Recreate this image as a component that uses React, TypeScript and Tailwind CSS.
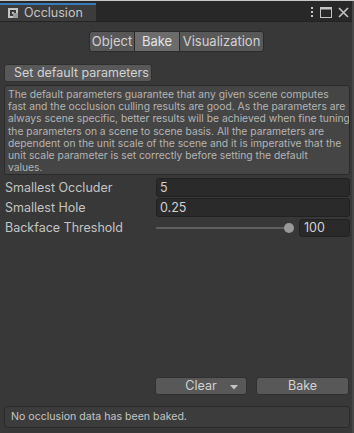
import React from "react";

const helpLines = [
  "The default parameters guarantee that any given scene computes",
  "fast and the occlusion culling results are good. As the parameters are",
  "always scene specific, better results will be achieved when fine tuning",
  "the parameters on a scene to scene basis. All the parameters are",
  "dependent on the unit scale of the scene and it is imperative that the",
  "unit scale parameter is set correctly before setting the default",
  "values.",
];

export default function App() {
  const font = { fontFamily: "Inter, 'Noto Sans', sans-serif" };
  return (
    <div
      className="w-[354px] h-[433px] bg-[#383838] flex flex-col text-[#c4c4c4] overflow-hidden relative"
      style={font}
    >
      <div className="h-px bg-[#c8c8c8] shrink-0" />
      {/* tab bar */}
      <div className="h-[21px] bg-[#282828] flex items-end shrink-0 border-b border-[#232323]">
        <div className="w-[96px] h-[18px] bg-[#3c3c3c] border-t-2 border-[#3a79bb] flex items-center pl-[8px] gap-[6px]">
          <svg width="10" height="10" viewBox="0 0 10 10">
            <rect x="0" y="0" width="10" height="10" fill="#c4c4c4" />
            <rect x="2" y="2" width="6" height="6" fill="#3c3c3c" />
            <rect x="4" y="4" width="2" height="2" fill="#c4c4c4" />
            <rect x="5" y="5" width="5" height="5" fill="#9a9a9a" />
          </svg>
          <span className="text-[12.5px] leading-none text-[#c4c4c4]">Occlusion</span>
        </div>
        <div className="flex-1 h-[18px] flex items-center justify-end gap-[6px] pr-[5px]">
          <svg width="4" height="12" viewBox="0 0 4 12">
            <rect x="1" y="1" width="2" height="2" fill="#c4c4c4" />
            <rect x="1" y="5" width="2" height="2" fill="#c4c4c4" />
            <rect x="1" y="9" width="2" height="2" fill="#c4c4c4" />
          </svg>
          <svg width="12" height="11" viewBox="0 0 12 11">
            <rect x="0.5" y="0.5" width="11" height="10" fill="none" stroke="#c4c4c4" />
            <rect x="0" y="0" width="12" height="2.5" fill="#c4c4c4" />
          </svg>
          <svg width="11" height="11" viewBox="0 0 11 11">
            <path d="M1 1 L10 10 M10 1 L1 10" stroke="#c4c4c4" strokeWidth="1.6" />
          </svg>
        </div>
      </div>

      {/* body */}
      <div className="flex-1 flex flex-col px-[4px]">
        <div className="flex justify-center mt-[9px] ml-[-1px]">
          <div className="flex h-[21px] text-[13px] leading-none">
            <div className="w-[46px] bg-[#585858] border border-[#2a2a2a] rounded-l-[3px] flex items-center justify-center text-[#d2d2d2]">
              Object
            </div>
            <div className="w-[44px] bg-[#6c6c6c] border-y border-[#2a2a2a] flex items-center justify-center text-[#e4e4e4]">
              Bake
            </div>
            <div className="w-[85px] bg-[#585858] border border-[#2a2a2a] rounded-r-[3px] flex items-center justify-center text-[#d2d2d2]">
              Visualization
            </div>
          </div>
        </div>

        <div className="mt-[12px] w-[148px] h-[18px] bg-[#585858] border border-[#303030] rounded-[3px] flex items-center pl-[9px] text-[12.5px] leading-none text-[#d2d2d2]">
          Set default parameters
        </div>

        <div className="mt-[3px] bg-[#454545] border border-[#2a2a2a] rounded-[3px] pl-[3px] pr-[2px] pt-[2px] pb-[1px] text-[10.3px] leading-[12.2px] text-[#b4b4b4] whitespace-nowrap overflow-hidden">
          {helpLines.map((l, i) => (
            <div key={i}>{l}</div>
          ))}
        </div>

        <div className="mt-[3px] flex flex-col gap-[1px] text-[12.5px] leading-none">
          <div className="flex items-center h-[19px]">
            <div className="w-[152px] pl-[1px]">Smallest Occluder</div>
            <div className="flex-1 h-[19px] bg-[#2a2a2a] border border-[#212121] rounded-[3px] flex items-center pl-[3px] text-[#d2d2d2]">
              5
            </div>
          </div>
          <div className="flex items-center h-[19px]">
            <div className="w-[152px] pl-[1px]">Smallest Hole</div>
            <div className="flex-1 h-[19px] bg-[#2a2a2a] border border-[#212121] rounded-[3px] flex items-center pl-[3px] text-[#d2d2d2]">
              0.25
            </div>
          </div>
          <div className="flex items-center h-[19px]">
            <div className="w-[152px] pl-[1px]">Backface Threshold</div>
            <div className="flex-1 flex items-center">
              <div className="flex-1 relative h-[10px] flex items-center mr-[5px]">
                <div className="w-full h-[2px] bg-[#5e5e5e]" />
                <div className="absolute right-[-5px] w-[10px] h-[10px] rounded-full bg-[#999999]" />
              </div>
              <div className="w-[51px] ml-[5px] h-[18px] bg-[#2a2a2a] border border-[#212121] rounded-[3px] flex items-center pl-[4px] text-[#d2d2d2]">
                100
              </div>
            </div>
          </div>
        </div>

        <div className="flex-1" />

        <div className="flex justify-end gap-[9px] pr-[1px] text-[12.5px] leading-none">
          <div className="w-[92px] h-[18px] bg-[#585858] border border-[#303030] rounded-[3px] flex items-center justify-center relative text-[#d2d2d2]">
            <span>Clear</span>
            <svg className="absolute right-[8px] top-[7px]" width="8" height="5" viewBox="0 0 8 5">
              <path d="M0 0 L8 0 L4 4.5 Z" fill="#c4c4c4" />
            </svg>
          </div>
          <div className="w-[93px] h-[18px] bg-[#585858] border border-[#303030] rounded-[3px] flex items-center justify-center text-[#d2d2d2]">
            Bake
          </div>
        </div>

        <div className="mt-[11px] mb-[5px] h-[22px] bg-[#3c3c3c] border border-[#2a2a2a] rounded-[3px] flex items-center pl-[6px] text-[10.6px] text-[#c4c4c4]">
          No occlusion data has been baked.
        </div>
      </div>
      <div className="absolute right-0 top-[1px] bottom-0 w-[2px] bg-[#474747]" />
    </div>
  );
}
